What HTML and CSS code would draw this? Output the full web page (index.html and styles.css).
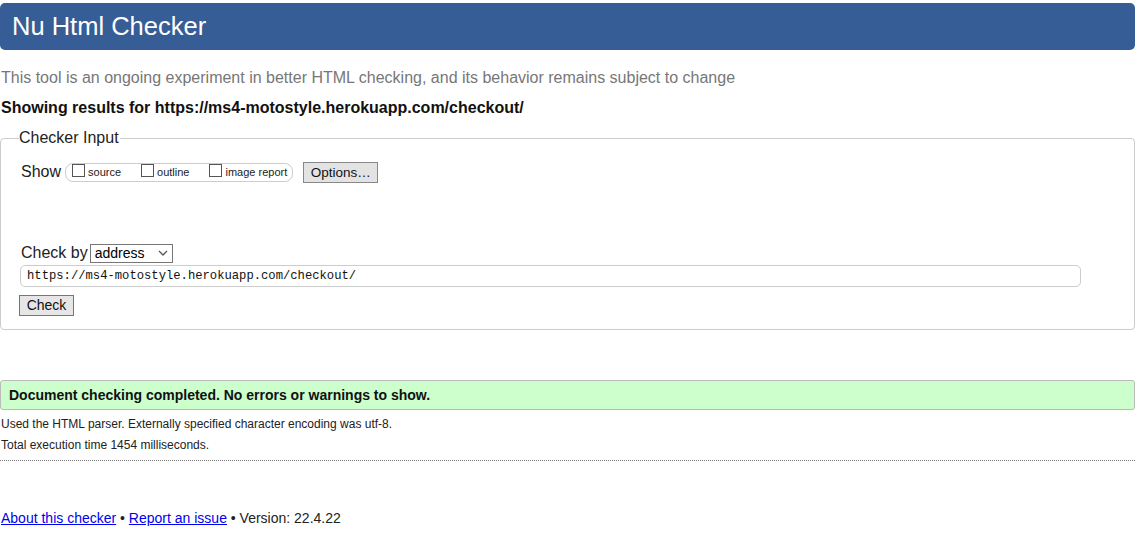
FILE: index.html
```html
<!DOCTYPE html>
<html>
<head>
<meta charset="utf-8">
<title>Nu Html Checker</title>
<link rel="stylesheet" href="styles.css">
</head>
<body>
<h1 class="banner">Nu Html Checker</h1>
<p class="intro">This tool is an ongoing experiment in better HTML checking, and its behavior remains subject to change</p>
<p class="results">Showing results for https://ms4-motostyle.herokuapp.com/checkout/</p>
<fieldset class="panel">
  <legend class="legend">Checker Input</legend>
  <div class="show-row">
    <span class="show-label">Show</span>
    <span class="pill">
      <label class="opt"><span class="box"></span>source</label>
      <label class="opt"><span class="box"></span>outline</label>
      <label class="opt opt-last"><span class="box"></span>image report</label>
    </span>
    <span class="btn btn-options">Options…</span>
  </div>
  <div class="checkby-row">
    <span class="checkby-label">Check by</span>
    <span class="select">address<svg class="chev" width="10" height="6" viewBox="0 0 10 6"><path d="M1 1 L5 5 L9 1" fill="none" stroke="#555" stroke-width="1.3"/></svg></span>
  </div>
  <div class="url">https://ms4-motostyle.herokuapp.com/checkout/</div>
  <span class="btn btn-check">Check</span>
</fieldset>
<div class="success">Document checking completed. No errors or warnings to show.</div>
<p class="details">Used the HTML parser. Externally specified character encoding was utf-8.</p>
<p class="details">Total execution time 1454 milliseconds.</p>
<hr class="dots">
<p class="footer"><a href="#">About this checker</a> • <a href="#">Report an issue</a> • Version: 22.4.22</p>
</body>
</html>
```
FILE: styles.css
```css
html, body {
  margin: 0;
  padding: 0;
  background: #fff;
}
body {
  font-family: "Liberation Sans", Arial, sans-serif;
  color: #000;
  padding: 3px 2px 0 0;
}
.banner {
  margin: 0;
  background: #365d95;
  color: #fff;
  font-weight: normal;
  font-size: 25.5px;
  line-height: 47px;
  height: 47px;
  padding-left: 12px;
  border-radius: 5px;
}
.intro {
  margin: 18px 0 0 1px;
  font-size: 16px;
  line-height: 20px;
  color: #777;
}
.results {
  margin: 10px 0 0 1px;
  font-size: 16px;
  line-height: 20px;
  font-weight: bold;
  color: #111;
}
.panel {
  margin: 11px 0 0 0;
  border: 1px solid #ccc;
  border-radius: 4px;
  padding: 0 0 13px 18px;
}
.legend {
  font-size: 16px;
  color: #222;
  padding: 0 1px 0 0;
  margin-left: 0;
}
.show-row {
  display: flex;
  align-items: center;
  margin-top: 14px;
  margin-left: 2px;
  height: 22px;
}
.show-label {
  font-size: 16px;
  color: #222;
  margin-right: 4px;
}
.pill {
  display: flex;
  align-items: center;
  border: 1px solid #ccc;
  border-radius: 8px;
  height: 17px;
  padding: 0 5px 0 6px;
}
.opt {
  display: flex;
  align-items: center;
  font-size: 11px;
  color: #222;
  margin-right: 20px;
}
.opt-last {
  margin-right: 0;
}
.box {
  width: 11px;
  height: 11px;
  border: 1px solid #555;
  margin-right: 3px;
  margin-top: -3px;
  background: #fff;
}
.btn {
  display: inline-block;
  background: #e6e6e6;
  border: 1px solid #767676;
  font-size: 14px;
  color: #111;
  box-sizing: border-box;
  text-align: center;
}
.btn-options {
  margin-left: 10px;
  width: 75px;
  height: 21px;
  line-height: 19px;
  font-size: 13.5px;
  border-color: #888;
  background: #e3e3e3;
}
.checkby-row {
  display: flex;
  align-items: center;
  margin-top: 60px;
  margin-left: 2px;
  height: 20px;
}
.checkby-label {
  font-size: 16px;
  color: #222;
  margin-right: 3px;
}
.select {
  display: flex;
  align-items: center;
  justify-content: space-between;
  width: 83px;
  height: 19px;
  box-sizing: border-box;
  border: 1px solid #767676;
  font-size: 14px;
  padding: 0 4px 0 4px;
  margin-left: -1px;
  color: #000;
}
.chev {
  display: block;
}
.url {
  margin-top: 2px;
  margin-left: 1px;
  width: 1061px;
  height: 22px;
  box-sizing: border-box;
  border: 1px solid #ccc;
  border-radius: 5px;
  font-family: "Liberation Mono", "DejaVu Sans Mono", monospace;
  font-size: 12.2px;
  line-height: 20px;
  padding-left: 6px;
  color: #111;
}
.btn-check {
  display: block;
  margin-top: 8px;
  margin-left: 0;
  width: 55px;
  height: 21px;
  line-height: 19px;
}
.success {
  margin-top: 50px;
  background: #ccffcc;
  border: 1px solid #bbb;
  border-radius: 3px;
  height: 30px;
  box-sizing: border-box;
  line-height: 28px;
  padding-left: 8px;
  font-size: 14px;
  font-weight: bold;
  color: #111;
}
.details {
  margin: 7px 0 0 1px;
  font-size: 12px;
  line-height: 15px;
  color: #222;
}
.details + .details {
  margin-top: 6px;
}
.dots {
  margin: 7px 0 0 0;
  border: 0;
  border-top: 1px dotted #777;
  height: 0;
}
.footer {
  margin: 49px 0 0 1px;
  font-size: 14px;
  line-height: 17px;
  color: #222;
}
.footer a {
  color: #00e;
}
```
